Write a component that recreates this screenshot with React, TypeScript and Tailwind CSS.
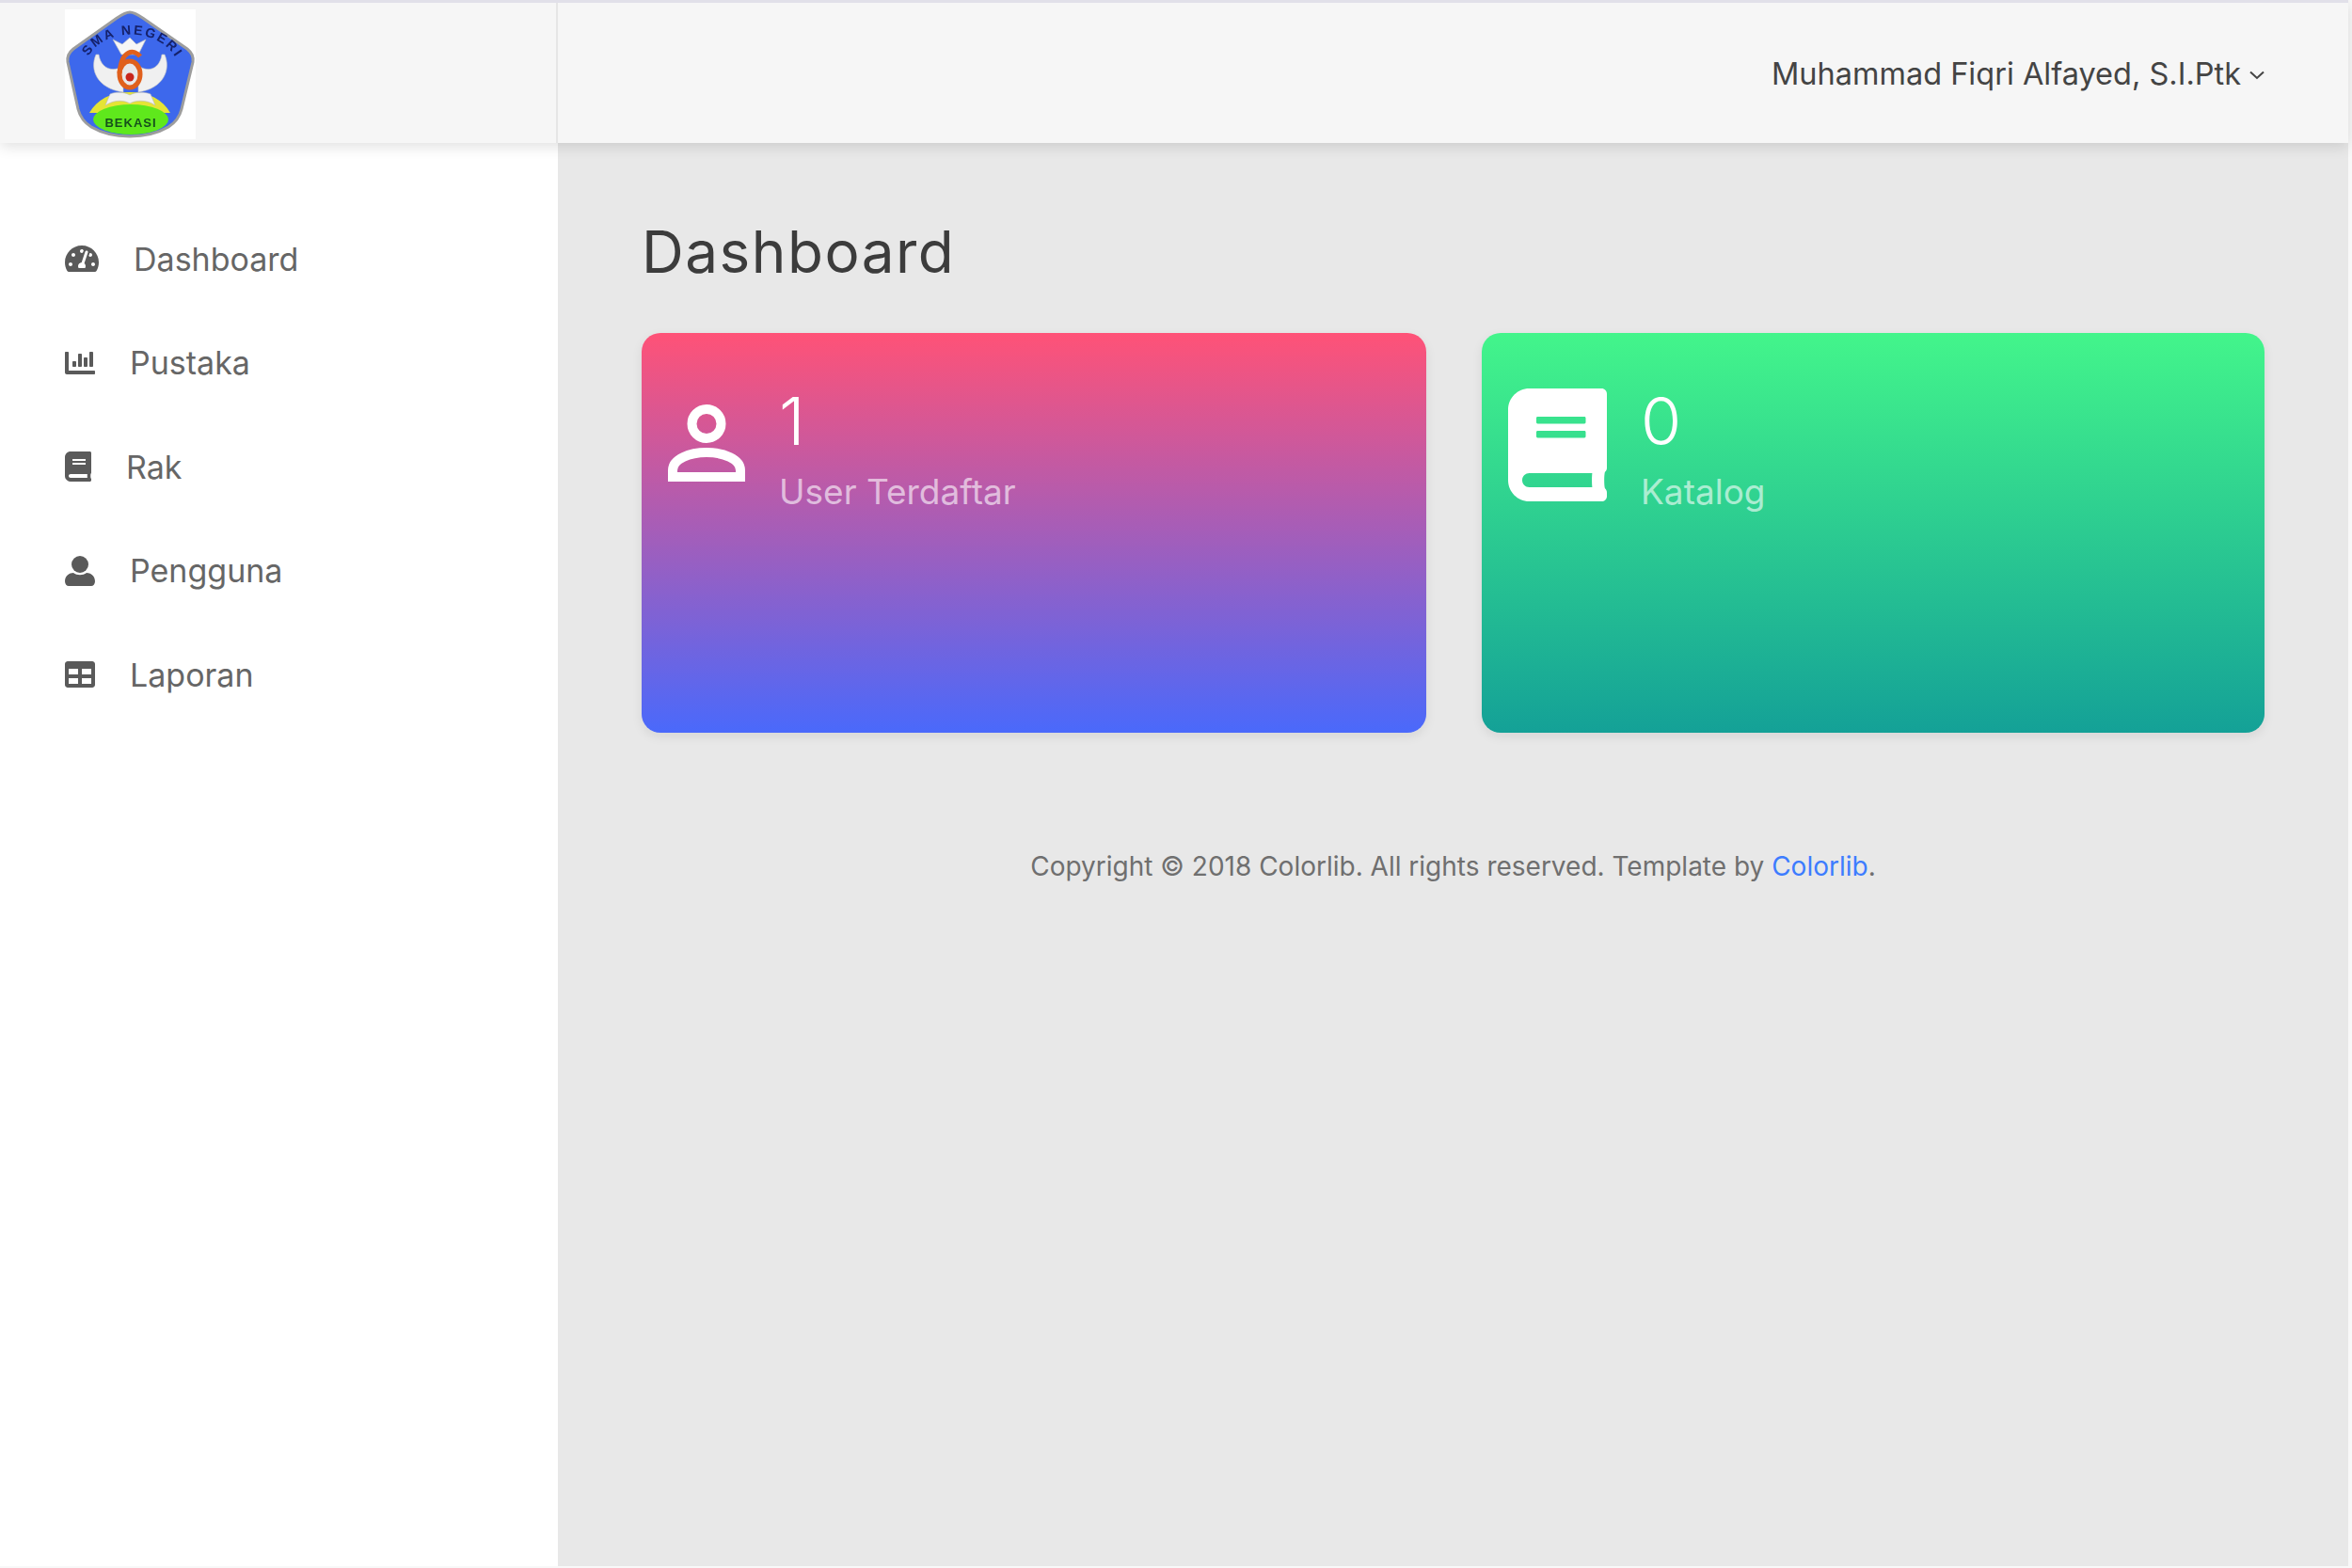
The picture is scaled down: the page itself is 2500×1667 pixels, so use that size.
import { FaBook, FaChartBar, FaTable, FaTachometerAlt } from "react-icons/fa";

const font = { fontFamily: "Inter, sans-serif" };

function Logo() {
  return (
    <svg width="139" height="138" viewBox="0 0 139 138" className="bg-white block">
      <defs>
        <filter id="soft">
          <feGaussianBlur stdDeviation="0.7" />
        </filter>
        <path id="arc" d="M25 50 C 42 20, 96 18, 117 50" />
      </defs>
      <g filter="url(#soft)">
        <path
          d="M69 3 C 74 3 78 6 84 10 L 130 42 C 135 46 137 50 136 56 L 124 106 C 122 114 118 120 110 125 C 98 132 84 135 69 135 C 54 135 40 132 28 125 C 20 120 16 114 14 106 L 3 56 C 2 50 4 46 9 42 L 54 10 C 60 6 64 3 69 3 Z"
          fill="#3c68ec"
          stroke="#9d9d9d"
          strokeWidth="3"
        />
        <path d="M26 110 C 34 96 48 88 69 88 C 90 88 104 96 112 110 Z" fill="#e4e436" />
        <ellipse cx="70" cy="117" rx="40" ry="16" fill="#5ee81f" />
        <path d="M43 102 C 54 95 64 97 69 100 C 74 97 86 95 96 102 L 91 90 C 84 87 74 88 69 91 C 64 88 54 87 48 90 Z" fill="#f1f1f1" stroke="#b8b8b8" strokeWidth="0.6" />
        <path d="M33 48 C 26 64 34 84 62 88 L 62 60 C 50 68 38 62 36 48 Z" fill="#f0f0f0" stroke="#c4c4c4" strokeWidth="0.6" />
        <path d="M106 48 C 113 64 105 84 78 88 L 78 60 C 90 68 101 62 103 48 Z" fill="#f0f0f0" stroke="#c4c4c4" strokeWidth="0.6" />
        <path d="M51 32 L 60 48 L 78 48 L 86 32 L 76 37 L 69 30 L 61 37 Z" fill="#f6f6f6" stroke="#bdbdbd" strokeWidth="0.6" />
        <ellipse cx="69" cy="69" rx="11" ry="14" fill="#e8e8e8" stroke="#e0601e" strokeWidth="5" />
        <path d="M80 50 C 74 42 60 42 58 68" fill="none" stroke="#e0601e" strokeWidth="5" />
        <circle cx="69" cy="72" r="4.5" fill="#c8261e" />
        <text fontFamily="Liberation Sans, sans-serif" fontWeight="700" fontSize="14" fill="#14206a">
          <textPath href="#arc" textLength="108">SMA NEGERI</textPath>
        </text>
        <text x="70" y="125" textAnchor="middle" fontFamily="Liberation Sans, sans-serif" fontWeight="700" fontSize="13" letterSpacing="1" fill="#17501a">
          BEKASI
        </text>
      </g>
    </svg>
  );
}

function UserGlyph() {
  return (
    <svg width="32" height="32" viewBox="0 0 32 32" fill="#5a5a5a" className="shrink-0">
      <circle cx="16" cy="9" r="9" />
      <path d="M0 27 C0 21 5 18 9 18 C 13 21 19 21 23 18 C 27 18 32 21 32 27 C 32 30 30 32 28 32 L 4 32 C 2 32 0 30 0 27 Z" />
    </svg>
  );
}

function UserOutline() {
  return (
    <svg width="82" height="82" viewBox="0 0 82 82" fill="none" stroke="#fff" className="shrink-0">
      <circle cx="41" cy="20.5" r="15.5" strokeWidth="10" />
      <path d="M5 77 L 77 77 L 77 70 C 77 58 59 51 41 51 C 23 51 5 58 5 70 Z" strokeWidth="10" />
    </svg>
  );
}

const nav = [
  { label: "Dashboard", icon: <FaTachometerAlt size={36} className="w-9 h-8 shrink-0" /> },
  { label: "Pustaka", icon: <FaChartBar size={32} className="shrink-0" /> },
  { label: "Rak", icon: <FaBook size={32} className="w-7 shrink-0" /> },
  { label: "Pengguna", icon: <UserGlyph /> },
  { label: "Laporan", icon: <FaTable size={32} className="shrink-0" /> },
];

export default function App() {
  return (
    <div style={font} className="w-[2500px] h-[1667px] bg-[#f8f8f8] overflow-hidden pr-[4px]">
      <header className="h-[152px] border-t-[3px] border-[#e1e0e9] bg-[#f6f6f6] flex shadow-[0_4px_14px_rgba(0,0,0,0.12)] relative">
        <div className="w-[593px] border-r-2 border-[#e6e6e6] pl-[69px] pt-[7px]">
          <Logo />
        </div>
        <div className="flex-1 flex items-center justify-end pr-[89px] gap-[9px] text-[#444444] text-[32.5px] pt-[4px]">
          <span>Muhammad Fiqri Alfayed, S.I.Ptk</span>
          <svg width="16" height="10" viewBox="0 0 16 10" fill="none" stroke="#444444" strokeWidth="2">
            <path d="M1 1.5 L 8 8 L 15 1.5" />
          </svg>
        </div>
      </header>

      <div className="flex h-[1513px]">
        <aside className="w-[593px] bg-white pl-[69px] pt-[68px] flex flex-col text-[#5a5a5a]">
          {nav.map((item) => (
            <div key={item.label} className="h-[110.5px] flex items-center gap-[37px] text-[34px] text-[#666666]">
              <span className="text-[#5a5a5a] flex">{item.icon}</span>
              {item.label}
            </div>
          ))}
        </aside>

        <main className="flex-1 bg-[#e8e8e8] pl-[89px] pr-[89px] pt-[78px]">
          <h1 className="text-[62px] leading-[76px] tracking-[1.5px] font-normal text-[#3c3c3c]">Dashboard</h1>
          <div className="grid grid-cols-[834px_1fr] gap-[59px] mt-[48px]">
            <section className="h-[425px] rounded-[20px] bg-linear-to-b/srgb from-[#ff5277] to-[#4a69fb] flex items-start gap-[36px] pl-[28px] pt-[76px] shadow-[0_4px_12px_rgba(0,0,0,0.08)]">
              <UserOutline />
              <div className="-mt-[27px] text-white">
                <p className="text-[70px] leading-[90px] font-light">1</p>
                <p className="mt-[5px] text-[37px] leading-[50px] text-white/60">User Terdaftar</p>
              </div>
            </section>
            <section className="h-[425px] rounded-[20px] bg-linear-to-b/srgb from-[#43f58b] to-[#14a197] flex items-start gap-[36px] pl-[28px] pt-[59px] shadow-[0_4px_12px_rgba(0,0,0,0.08)]">
              <FaBook size={120} className="text-white w-[105px] shrink-0" />
              <div className="-mt-[10px] text-white">
                <p className="text-[70px] leading-[90px] font-light">0</p>
                <p className="mt-[5px] text-[37px] leading-[50px] text-white/60">Katalog</p>
              </div>
            </section>
          </div>
          <p className="mt-[122px] text-center text-[28px] leading-[40px] text-[#6f6f6f]">
            Copyright © 2018 Colorlib. All rights reserved. Template by <span className="text-[#3d7cff]">Colorlib</span>.
          </p>
        </main>
      </div>
    </div>
  );
}
